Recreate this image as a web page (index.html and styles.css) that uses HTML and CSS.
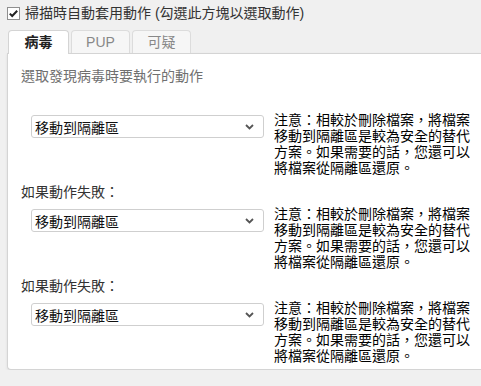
FILE: index.html
```html
<!DOCTYPE html>
<html lang="zh-Hant">
<head>
  <meta charset="UTF-8">
  <title>掃描動作</title>
  <link rel="stylesheet" href="styles.css">
</head>
<body>
  <div class="top">
    <span class="check">
      <svg width="13" height="13" viewBox="0 0 13 13">
        <rect x="0.5" y="0.5" width="12" height="12" fill="#fff" stroke="#8f8f8f"/>
        <path d="M2.8 6.6 L5.2 9 L10.2 3.8" fill="none" stroke="#222" stroke-width="2"/>
      </svg>
    </span>
    <span>掃描時自動套用動作 (勾選此方塊以選取動作)</span>
  </div>

  <!-- Tabs -->
  <div class="tabs">
    <div class="tab active">病毒</div>
    <div class="tab">PUP</div>
    <div class="tab">可疑</div>
  </div>

  <div class="panel">
    <div class="heading">選取發現病毒時要執行的動作</div>

    <div class="row first">
      <div class="select">
        <span>移動到隔離區</span>
        <svg width="9" height="6" viewBox="0 0 9 6"><path d="M1 1 L4.5 4.5 L8 1" fill="none" stroke="#555" stroke-width="1.8"/></svg>
      </div>
      <div class="note">注意：相較於刪除檔案，將檔案移動到隔離區是較為安全的替代方案。如果需要的話，您還可以將檔案從隔離區還原。</div>
    </div>

    <div class="label">如果動作失敗：</div>
    <div class="row">
      <div class="select">
        <span>移動到隔離區</span>
        <svg width="9" height="6" viewBox="0 0 9 6"><path d="M1 1 L4.5 4.5 L8 1" fill="none" stroke="#555" stroke-width="1.8"/></svg>
      </div>
      <div class="note">注意：相較於刪除檔案，將檔案移動到隔離區是較為安全的替代方案。如果需要的話，您還可以將檔案從隔離區還原。</div>
    </div>

    <div class="label">如果動作失敗：</div>
    <div class="row">
      <div class="select">
        <span>移動到隔離區</span>
        <svg width="9" height="6" viewBox="0 0 9 6"><path d="M1 1 L4.5 4.5 L8 1" fill="none" stroke="#555" stroke-width="1.8"/></svg>
      </div>
      <div class="note">注意：相較於刪除檔案，將檔案移動到隔離區是較為安全的替代方案。如果需要的話，您還可以將檔案從隔離區還原。</div>
    </div>
  </div>
</body>
</html>
```

FILE: styles.css
```css
/* General Styles */
body {
  font-family: "Liberation Sans", "Noto Sans CJK TC", sans-serif;
  font-size: 14px;
  margin: 0;
  background-color: #f0f0f0;
  color: #333;
  overflow: hidden;
}

.top {
  display: flex;
  align-items: center;
  gap: 5px;
  padding: 6px 7px 0;
  height: 15px;
  line-height: 15px;
}

.check svg {
  display: block;
}

/* Tabs */
.tabs {
  display: flex;
  gap: 2px;
  padding: 9px 0 0 8px;
}

.tab {
  min-width: 55px;
  height: 22px;
  line-height: 22px;
  padding: 0 1px;
  text-align: center;
  color: #888;
  background: #f6f6f6;
  border: 1px solid #dcdcdc;
  border-bottom: none;
  border-radius: 4px 4px 0 0;
}

.tab.active {
  color: #222;
  font-weight: bold;
  background: #fff;
  border-color: #d4d4d4;
  min-width: 57px;
  margin-bottom: -1px;
  height: 23px;
  position: relative;
}

.panel {
  background: #fff;
  border: 1px solid #d4d4d4;
  border-right: none;
  border-radius: 0 0 0 4px;
  margin-left: 7px;
  padding: 14px 0 5px 13px;
  box-shadow: 0 1px 3px rgba(0, 0, 0, 0.08);
}

.heading {
  line-height: 16px;
  color: #707070;
}

.row {
  display: flex;
  align-items: flex-start;
  margin-top: 6px;
}

.row.first {
  margin-top: 28px;
}

.select {
  display: flex;
  align-items: center;
  justify-content: space-between;
  box-sizing: border-box;
  width: 233px;
  height: 23px;
  margin: 3px 0 0 10px;
  padding: 0 9px 0 3px;
  background: #fff;
  border: 1px solid #cfcfcf;
  border-radius: 3px;
  color: #111;
}

.note {
  width: 200px;
  margin-left: 10px;
  line-height: 16px;
  color: #000;
}

.label {
  margin-top: 8px;
  line-height: 16px;
  color: #333;
}
```
